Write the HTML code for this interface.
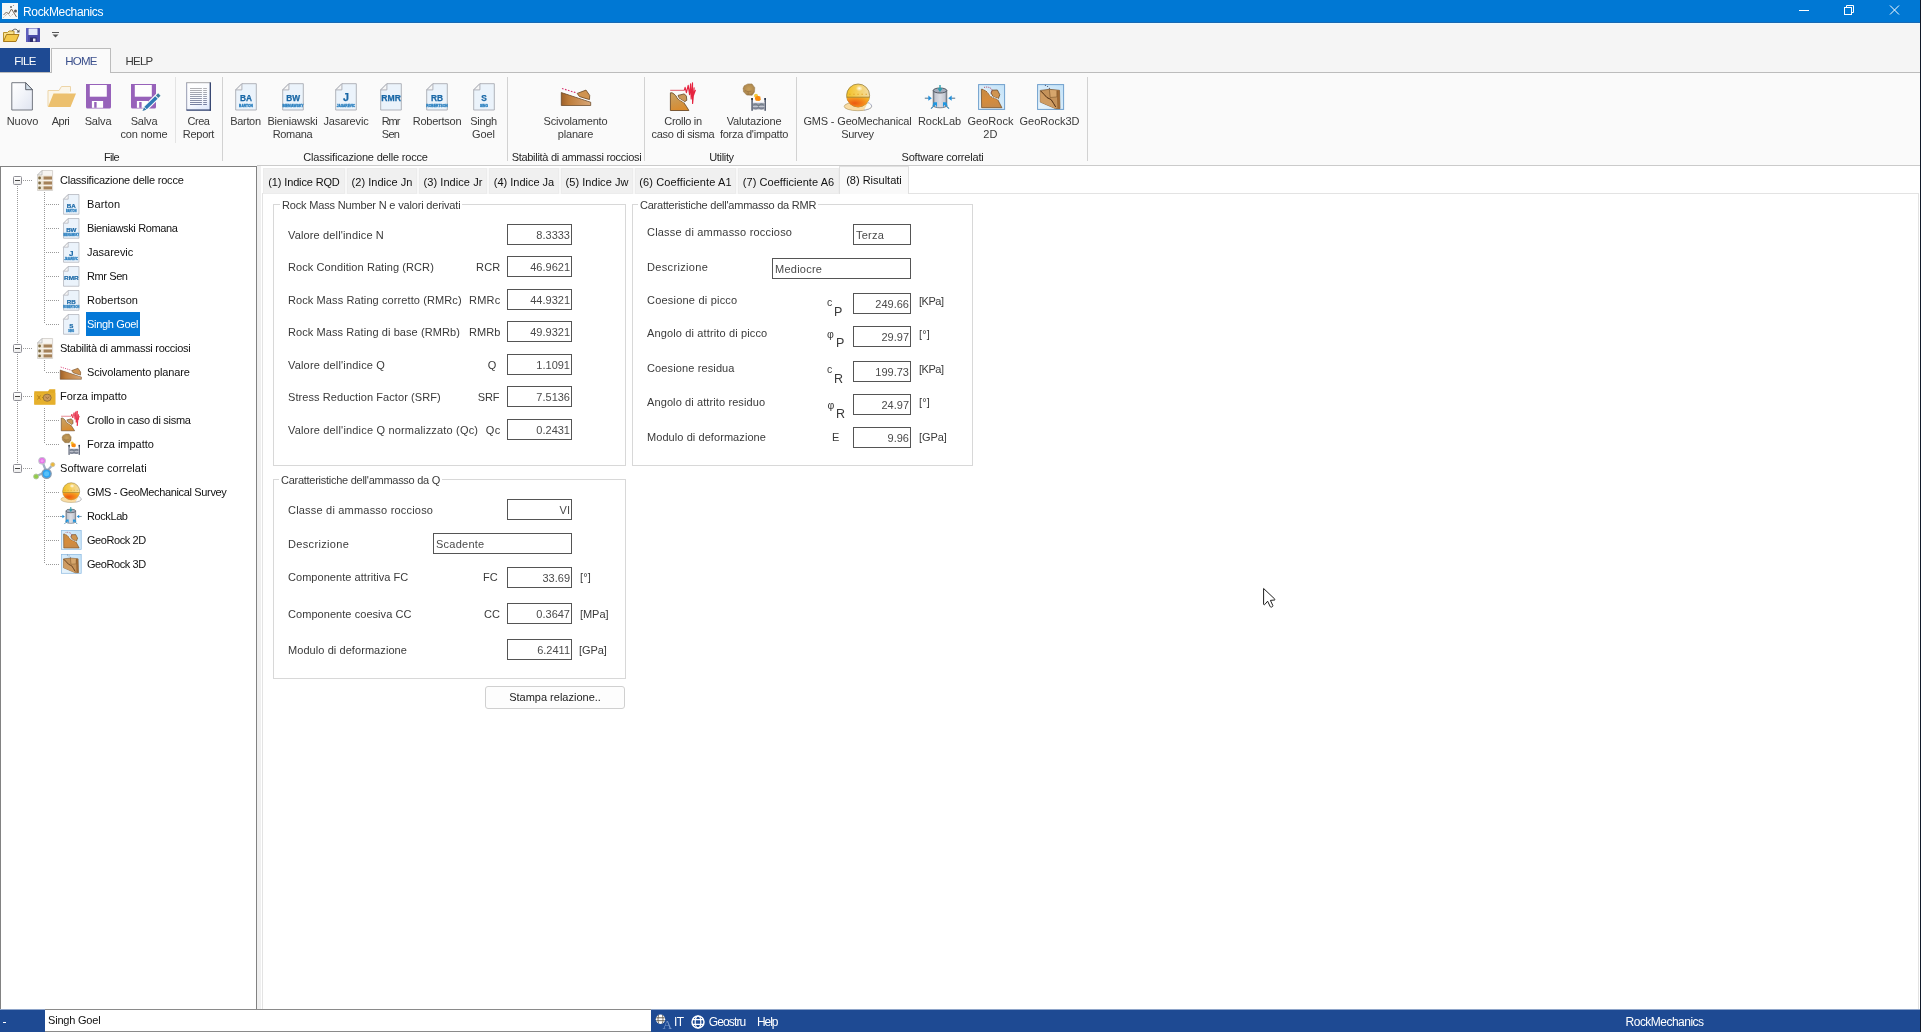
<!DOCTYPE html>
<html lang="it"><head><meta charset="utf-8"><title>RockMechanics</title>
<style>
html,body{margin:0;padding:0;}
body{width:1921px;height:1032px;overflow:hidden;background:#fff;position:relative;
 font-family:"Liberation Sans",sans-serif;font-size:11px;color:#1e1e1e;line-height:13px;}
div,span{position:absolute;box-sizing:border-box;white-space:nowrap;}
svg{position:absolute;overflow:visible;}
.c{text-align:center;transform:translateX(-50%);}
.rl{color:#3a3a3a;font-size:11px;line-height:13px;letter-spacing:-0.22px;}
.gl{color:#262626;letter-spacing:-0.22px;}
.vs{width:1px;background:#d2d2d2;}
.tr{font-size:11px;color:#111;letter-spacing:-0.3px;}
.tab{letter-spacing:-0.25px;top:168px;height:26px;background:#f0f0f0;border:1px solid #ececec;color:#111;line-height:26px;text-align:center;}
.lb{color:#3a3a3a;letter-spacing:0.120px;}
.tb{height:21px;border:1px solid #555;background:#fff;line-height:21px;padding:0 1px 0 2px;color:#4a4a4a;overflow:hidden;}
.tbr{text-align:right;}
.grp{border:1px solid #d8d8d8;}
.gt{background:#fff;color:#3a3a3a;padding:0 2px;letter-spacing:-0.17px;}
.dot-h{height:1px;background-image:linear-gradient(90deg,#9a9a9a 1px,transparent 1px);background-size:2px 1px;}
.dot-v{width:1px;background-image:linear-gradient(180deg,#9a9a9a 1px,transparent 1px);background-size:1px 2px;}
.pm{width:9px;height:9px;border:1px solid #8f8f96;border-radius:1.500px;background:linear-gradient(#fff,#eee);}
.pm i{position:absolute;left:1px;top:3px;width:5px;height:1px;background:#444;}
</style></head><body>
<div id="w" style="left:0;top:0;width:1921px;height:1032px;will-change:transform;">

<div style="left:0;top:0;width:1921px;height:23px;background:#0078d4;border-bottom:1px solid #1a69b3;"></div>
<div style="left:23px;top:5px;color:#fff;font-size:12px;line-height:14px;letter-spacing:-0.35px;">RockMechanics</div>
<svg style="left:2px;top:3px" width="16" height="16" viewBox="0 0 16 16"><rect x="0" y="0" width="16" height="16" fill="#f4f8f8"/><path d="M1.500 12l3-3 2 2 3-5 5 8" stroke="#7a6a5a" stroke-width="1" fill="none"/><path d="M1.500 14.500l4-4 3 3 3-3" stroke="#a08a7a" stroke-width="0.800" fill="none" stroke-dasharray="1 1"/><circle cx="13.500" cy="8" r="1.500" fill="#555"/><circle cx="9" cy="4" r="1" fill="#666"/><circle cx="11.500" cy="2.500" r="0.600" fill="#888"/></svg>
<svg style="left:1790px;top:0" width="131" height="23" viewBox="0 0 131 23"><g stroke="#fff" stroke-width="1" fill="none"><path d="M9 10.5h10"/><rect x="54.5" y="7.500" width="7" height="7"/><path d="M56.500 7.500v-2h7v7h-2"/><path d="M100 5.500l9 9M109 5.500l-9 9"/></g></svg>
<div style="left:0;top:23px;width:1921px;height:50px;background:#f5f5f5;border-top:1px solid #ecfbff;"></div>
<svg style="left:3px;top:28px" width="17" height="15" viewBox="0 0 17 15"><path d="M0.500 13.500v-9h4l1.500-1.500h5v3" fill="#f7e08a" stroke="#b8902a" stroke-width="1"/><path d="M0.500 13.500l3-7h12.500l-3 7z" fill="#f3c84a" stroke="#a87a1a" stroke-width="1"/><path d="M9 3c2-2.500 5-2.500 6 0.500" stroke="#555" stroke-width="1" fill="none"/><path d="M16.500 1.500v3h-3z" fill="#555"/></svg>
<svg style="left:26px;top:28px" width="14" height="14" viewBox="0 0 14 14"><rect x="0" y="0" width="14" height="14" rx="0.500" fill="#4a4aa8"/><rect x="2.500" y="0.500" width="9" height="6.500" fill="#e4e8fa"/><rect x="4" y="9.500" width="6.500" height="4.500" fill="#2a2a6a"/><rect x="7" y="10.500" width="2.500" height="3" fill="#e8e8f8"/><path d="M0 0h2v14h-2z" fill="#7070cc" opacity="0.600"/></svg>
<svg style="left:51px;top:31px" width="9" height="8" viewBox="0 0 9 8"><path d="M1 1.500h7" stroke="#555" stroke-width="1"/><path d="M1.500 3.500h6l-3 3z" fill="#555"/></svg>
<div style="left:0;top:48px;width:50px;height:25px;background:#1e4a93;color:#fff;font-size:11.500px;letter-spacing:-0.700px;line-height:26px;text-align:center;">FILE</div>
<div style="left:0;top:72px;width:1921px;height:1px;background:#bcbcbc;"></div>
<div style="left:51px;top:48px;width:60px;height:25px;background:#fafafa;border:1px solid #bcbcbc;border-bottom:none;color:#3a4f8c;font-size:11.500px;letter-spacing:-0.800px;line-height:24px;text-align:center;">HOME</div>
<div style="left:112px;top:48px;width:54px;height:24px;color:#3a3a3a;font-size:11.500px;letter-spacing:-0.800px;line-height:26px;text-align:center;">HELP</div>
<div style="left:0;top:73px;width:1921px;height:93px;background:#fafafa;"></div>
<div style="left:257px;top:165px;width:1664px;height:1px;background:#cbcbcb;"></div>
<div class="rl c" style="left:22.5px;top:115px;letter-spacing:-0.049px;">Nuovo</div>
<div class="rl c" style="left:60.5px;top:115px;letter-spacing:-0.487px;">Apri</div>
<div class="rl c" style="left:98px;top:115px;letter-spacing:-0.158px;">Salva</div>
<div class="rl c" style="left:144px;top:115px;letter-spacing:-0.158px;">Salva</div>
<div class="rl c" style="left:144px;top:128px;letter-spacing:-0.152px;">con nome</div>
<div class="rl c" style="left:198.5px;top:115px;letter-spacing:-0.448px;">Crea</div>
<div class="rl c" style="left:198.5px;top:128px;letter-spacing:-0.286px;">Report</div>
<div class="vs" style="left:175px;top:77px;height:66px;background:#e4e4e4"></div>
<div class="gl c" style="left:111.5px;top:151px;letter-spacing:-0.711px;">File</div>
<div class="vs" style="left:222px;top:77px;height:84px;"></div>
<div class="rl c" style="left:245.5px;top:115px;letter-spacing:-0.344px;">Barton</div>
<div class="rl c" style="left:292.5px;top:115px;letter-spacing:-0.174px;">Bieniawski</div>
<div class="rl c" style="left:292.5px;top:128px;letter-spacing:-0.336px;">Romana</div>
<div class="rl c" style="left:346px;top:115px;letter-spacing:-0.159px;">Jasarevic</div>
<div class="rl c" style="left:390.5px;top:115px;letter-spacing:-1.041px;">Rmr</div>
<div class="rl c" style="left:390.5px;top:128px;letter-spacing:-0.689px;">Sen</div>
<div class="rl c" style="left:437px;top:115px;letter-spacing:-0.233px;">Robertson</div>
<div class="rl c" style="left:483.5px;top:115px;letter-spacing:-0.36px;">Singh</div>
<div class="rl c" style="left:483.5px;top:128px;letter-spacing:-0.117px;">Goel</div>
<div class="gl c" style="left:365.5px;top:151px;letter-spacing:-0.186px;">Classificazione delle rocce</div>
<div class="vs" style="left:507px;top:77px;height:84px;"></div>
<div class="rl c" style="left:575.5px;top:115px;letter-spacing:-0.186px;">Scivolamento</div>
<div class="rl c" style="left:575.5px;top:128px;letter-spacing:-0.167px;">planare</div>
<div class="gl c" style="left:576.5px;top:151px;letter-spacing:-0.291px;">Stabilità di ammassi rocciosi</div>
<div class="vs" style="left:644px;top:77px;height:84px;"></div>
<div class="rl c" style="left:683px;top:115px;letter-spacing:-0.332px;">Crollo in</div>
<div class="rl c" style="left:683px;top:128px;letter-spacing:-0.287px;">caso di sisma</div>
<div class="rl c" style="left:754px;top:115px;letter-spacing:-0.177px;">Valutazione</div>
<div class="rl c" style="left:754px;top:128px;letter-spacing:-0.237px;">forza d'impatto</div>
<div class="gl c" style="left:721.5px;top:151px;letter-spacing:-0.332px;">Utility</div>
<div class="vs" style="left:796px;top:77px;height:84px;"></div>
<div class="rl c" style="left:857.5px;top:115px;letter-spacing:-0.159px;">GMS - GeoMechanical</div>
<div class="rl c" style="left:857.5px;top:128px;letter-spacing:-0.25px;">Survey</div>
<div class="rl c" style="left:939.5px;top:115px;letter-spacing:-0.037px;">RockLab</div>
<div class="rl c" style="left:990.5px;top:115px;letter-spacing:0.023px;">GeoRock</div>
<div class="rl c" style="left:990.5px;top:128px;letter-spacing:0.238px;">2D</div>
<div class="rl c" style="left:1049.5px;top:115px;letter-spacing:-0.003px;">GeoRock3D</div>
<div class="gl c" style="left:942.5px;top:151px;letter-spacing:-0.2px;">Software correlati</div>
<div class="vs" style="left:1087px;top:77px;height:84px;"></div>
<svg style="left:11px;top:82px" width="23" height="30" viewBox="0 0 23 30"><defs><linearGradient id="g1" x1="0" y1="0" x2="1" y2="1"><stop offset="0" stop-color="#ffffff"/><stop offset="0.450" stop-color="#f3f5fa"/><stop offset="1" stop-color="#dfe4f0"/></linearGradient></defs><path d="M0.800 0.700h13.900l6.700 7v20.300h-20.600z" fill="url(#g1)" stroke="#666b75" stroke-width="0.900"/><path d="M14.700 0.700v7h6.700z" fill="#d3dee9" stroke="#50555f" stroke-width="0.900" stroke-linejoin="round"/></svg>
<svg style="left:47px;top:86px" width="30" height="22" viewBox="0 0 30 22"><path d="M1 20.500v-16h11l2.500-4h9v5" fill="#fbf6ea" stroke="#edd5a8" stroke-width="1"/><path d="M1 21l5.500-13.500h22.500l-5.500 13.500z" fill="#ecc06e"/></svg>
<svg style="left:86px;top:84px" width="30" height="28" viewBox="0 0 30 28"><path d="M0 0h25v23a1.500 1.500 0 0 1-1.500 1.500h-22a1.500 1.500 0 0 1-1.500-1.500z" fill="#9762ba"/><rect x="3.800" y="1" width="17" height="11.700" fill="#fefefe"/><rect x="5.900" y="17" width="11.200" height="6.800" fill="#fefefe"/><rect x="8.200" y="18" width="2.400" height="5.800" fill="#9762ba"/></svg>
<svg style="left:131px;top:84px" width="30" height="28" viewBox="0 0 30 28"><path d="M0 0h25v23a1.500 1.500 0 0 1-1.500 1.500h-22a1.500 1.500 0 0 1-1.500-1.500z" fill="#9762ba"/><rect x="3.800" y="1" width="17" height="11.700" fill="#fefefe"/><rect x="5.900" y="17" width="11.200" height="6.800" fill="#fefefe"/><rect x="8.200" y="18" width="2.400" height="5.800" fill="#9762ba"/><g transform="translate(11.300,27.300) rotate(-44.500)"><path d="M-0.500 0l4.500-2.900h21v5.800h-21z" fill="#fbfbfb"/><path d="M0.300 0l3.700-1.700v3.400z" fill="#3a78a8"/><rect x="4.600" y="-1.700" width="15.200" height="3.400" fill="#2f7ab6"/><rect x="20.700" y="-1.700" width="3.200" height="3.400" fill="#3c7f9e"/></g></svg>
<svg style="left:186px;top:82px" width="26" height="30" viewBox="0 0 26 30"><defs><linearGradient id="g2" x1="0.300" y1="0" x2="0.700" y2="1"><stop offset="0" stop-color="#ffffff"/><stop offset="0.650" stop-color="#f7f9fe"/><stop offset="1" stop-color="#dfe8fb"/></linearGradient></defs><rect x="0.700" y="0.700" width="23.800" height="27.600" fill="url(#g2)"/><path d="M0.700 28.300v-27.600" stroke="#8b91a9" stroke-width="0.900"/><path d="M0.300 0.700h24.600" stroke="#9c9c9e" stroke-width="0.900"/><path d="M24.300 0.500v28.200" stroke="#2f3f6c" stroke-width="1.300"/><path d="M0.500 28.100h24.400" stroke="#2f3f6c" stroke-width="1.300"/><path d="M4 6.5h11.900M17.200 6.5h3.700" stroke="#a3a3a6" stroke-width="0.850"/><path d="M4 8.5h11.900M17.200 8.5h3.700" stroke="#9d9ea4" stroke-width="0.850"/><path d="M4 10.5h11.900M17.200 10.5h3.700" stroke="#9698a2" stroke-width="0.850"/><path d="M4 12.5h11.900M17.200 12.5h3.700" stroke="#8e92a0" stroke-width="0.850"/><path d="M4 14.5h11.900M17.200 14.5h3.700" stroke="#878c9e" stroke-width="0.850"/><path d="M4 16.5h11.900M17.200 16.5h3.700" stroke="#7f859c" stroke-width="0.850"/><path d="M4 18.5h11.900M17.200 18.5h3.700" stroke="#757c98" stroke-width="0.850"/><path d="M4 20.5h11.900M17.200 20.5h3.700" stroke="#6a7394" stroke-width="0.850"/><path d="M4 22.5h11.900M17.200 22.5h3.700" stroke="#5f698f" stroke-width="0.850"/></svg>
<svg style="left:235px;top:83px" width="22.0" height="28.0" viewBox="0 0 22.0 28.0"><g transform="scale(1.0)"><path d="M6.900 0.700h14.400v26.300h-20.600v-20.100z" fill="#ebf3fb" stroke="#a9abb3" stroke-width="0.900"/><path d="M6.900 0.700v6.200h-6.200z" fill="#f6f6f6" stroke="#a9abb3" stroke-width="0.900" stroke-linejoin="round"/><text x="11.100" y="18" text-anchor="middle" font-family="Liberation Sans,sans-serif" font-weight="bold" font-size="8.3" fill="#1867a6" stroke="#1867a6" stroke-width="0.250">BA</text><text x="11" y="24" text-anchor="middle" font-family="Liberation Sans,sans-serif" font-weight="bold" font-size="3.800" fill="#1b6ba9" stroke="#2f86c6" stroke-width="0.350" textLength="13.8" lengthAdjust="spacingAndGlyphs">BARTON</text></g></svg>
<svg style="left:282px;top:83px" width="22.0" height="28.0" viewBox="0 0 22.0 28.0"><g transform="scale(1.0)"><path d="M6.900 0.700h14.400v26.300h-20.600v-20.100z" fill="#ebf3fb" stroke="#a9abb3" stroke-width="0.900"/><path d="M6.900 0.700v6.200h-6.200z" fill="#f6f6f6" stroke="#a9abb3" stroke-width="0.900" stroke-linejoin="round"/><text x="11.100" y="18" text-anchor="middle" font-family="Liberation Sans,sans-serif" font-weight="bold" font-size="8.3" fill="#1867a6" stroke="#1867a6" stroke-width="0.250">BW</text><text x="11" y="24" text-anchor="middle" font-family="Liberation Sans,sans-serif" font-weight="bold" font-size="3.800" fill="#1b6ba9" stroke="#2f86c6" stroke-width="0.350" textLength="21" lengthAdjust="spacingAndGlyphs">BIENIAWSKY</text></g></svg>
<svg style="left:335px;top:83px" width="22.0" height="28.0" viewBox="0 0 22.0 28.0"><g transform="scale(1.0)"><path d="M6.900 0.700h14.400v26.300h-20.600v-20.100z" fill="#ebf3fb" stroke="#a9abb3" stroke-width="0.900"/><path d="M6.900 0.700v6.200h-6.200z" fill="#f6f6f6" stroke="#a9abb3" stroke-width="0.900" stroke-linejoin="round"/><text x="11.100" y="18" text-anchor="middle" font-family="Liberation Sans,sans-serif" font-weight="bold" font-size="10.7" fill="#1867a6" stroke="#1867a6" stroke-width="0.250">J</text><text x="11" y="24" text-anchor="middle" font-family="Liberation Sans,sans-serif" font-weight="bold" font-size="3.800" fill="#1b6ba9" stroke="#2f86c6" stroke-width="0.350" textLength="18.3" lengthAdjust="spacingAndGlyphs">JASAREVIC</text></g></svg>
<svg style="left:380px;top:83px" width="22.0" height="28.0" viewBox="0 0 22.0 28.0"><g transform="scale(1.0)"><path d="M6.900 0.700h14.400v26.300h-20.600v-20.100z" fill="#ebf3fb" stroke="#a9abb3" stroke-width="0.900"/><path d="M6.900 0.700v6.200h-6.200z" fill="#f6f6f6" stroke="#a9abb3" stroke-width="0.900" stroke-linejoin="round"/><text x="11.100" y="18" text-anchor="middle" font-family="Liberation Sans,sans-serif" font-weight="bold" font-size="8.3" fill="#1867a6" stroke="#1867a6" stroke-width="0.250" textLength="19.600" lengthAdjust="spacingAndGlyphs">RMR</text></g></svg>
<svg style="left:426px;top:83px" width="22.0" height="28.0" viewBox="0 0 22.0 28.0"><g transform="scale(1.0)"><path d="M6.900 0.700h14.400v26.300h-20.600v-20.100z" fill="#ebf3fb" stroke="#a9abb3" stroke-width="0.900"/><path d="M6.900 0.700v6.200h-6.200z" fill="#f6f6f6" stroke="#a9abb3" stroke-width="0.900" stroke-linejoin="round"/><text x="11.100" y="18" text-anchor="middle" font-family="Liberation Sans,sans-serif" font-weight="bold" font-size="8.3" fill="#1867a6" stroke="#1867a6" stroke-width="0.250">RB</text><text x="11" y="24" text-anchor="middle" font-family="Liberation Sans,sans-serif" font-weight="bold" font-size="3.800" fill="#1b6ba9" stroke="#2f86c6" stroke-width="0.350" textLength="21.4" lengthAdjust="spacingAndGlyphs">ROBERTSON</text></g></svg>
<svg style="left:473px;top:83px" width="22.0" height="28.0" viewBox="0 0 22.0 28.0"><g transform="scale(1.0)"><path d="M6.900 0.700h14.400v26.300h-20.600v-20.100z" fill="#ebf3fb" stroke="#a9abb3" stroke-width="0.900"/><path d="M6.900 0.700v6.200h-6.200z" fill="#f6f6f6" stroke="#a9abb3" stroke-width="0.900" stroke-linejoin="round"/><text x="11.100" y="18" text-anchor="middle" font-family="Liberation Sans,sans-serif" font-weight="bold" font-size="8.3" fill="#1867a6" stroke="#1867a6" stroke-width="0.250">S</text><text x="11" y="24" text-anchor="middle" font-family="Liberation Sans,sans-serif" font-weight="bold" font-size="3.800" fill="#1b6ba9" stroke="#2f86c6" stroke-width="0.350" textLength="8" lengthAdjust="spacingAndGlyphs">SING</text></g></svg>
<svg style="left:561px;top:87px" width="30.0" height="19.0" viewBox="0 0 30.0 19.0"><defs><linearGradient id="g3" x1="0" y1="0" x2="1" y2="0"><stop offset="0" stop-color="#9c602a"/><stop offset="0.250" stop-color="#bd7c3a"/><stop offset="1" stop-color="#d9a878"/></linearGradient></defs><g transform="scale(1.0)"><path d="M0.300 5.500l29.400 9.700v3.300h-29.400z" fill="url(#g3)" stroke="#5f3d1c" stroke-width="0.700" stroke-linejoin="round"/><path d="M1 4.300l28.500 9.500" stroke="#fdfdfd" stroke-width="1.100"/><path d="M16.200 6.400l8.800-3.300 3.700 5.300-0.200 4.200-4.800-1.400-5.300-1.700z" fill="#cf9350" stroke="#6a4520" stroke-width="0.800" stroke-linejoin="round"/><path d="M1 1.500l14.500 4.400" stroke="#d6306c" stroke-width="1.100" stroke-dasharray="1.600 1.500"/></g></svg>
<svg style="left:670px;top:83px" width="27.0" height="28.0" viewBox="0 0 27.0 28.0"><defs><linearGradient id="g4" x1="0" y1="0" x2="0.300" y2="1"><stop offset="0" stop-color="#c9a468"/><stop offset="0.600" stop-color="#cf9548"/><stop offset="1" stop-color="#d98c30"/></linearGradient></defs><g transform="scale(1.0)"><path d="M0.400 9.800h1.700c3 1.500 4.300 3.500 5.600 6.100 2 1.500 4 2.200 5.900 3.500 2 2.500 3.700 5.500 5.300 8.100h-18.500z" fill="url(#g4)" stroke="#5f3d1c" stroke-width="0.800" stroke-linejoin="round"/><path d="M8 12.400l6.300-1.500 2.100 2.200 0.400 4.200-2.100 1.400-5.700-3.400z" fill="#c9975a" stroke="#5f4326" stroke-width="0.800" stroke-linejoin="round"/><path d="M7.200 12.800c0.600 1.300 0.900 2 1.300 2.800 2.200 1.500 4 2.300 5.600 3.600" stroke="#fdf6ea" stroke-width="1" fill="none"/><path d="M0.200 7.300h14.100" stroke="#dc4a5c" stroke-width="0.900"/><path d="M14.300 7.300l0.800-2.900 1.300 5.300 1.800-7.400 1.400 9.400 1-10.800 0.600 15 1.300-16 0.100 20.600 1.500-15.700-0.600 7.600 2-5.500" stroke="#e6233f" stroke-width="1.150" fill="none" stroke-linejoin="round"/></g></svg>
<svg style="left:743px;top:84px" width="24.0" height="27.0" viewBox="0 0 24.0 27.0"><defs><radialGradient id="g5" cx="0.500" cy="0.450" r="0.600"><stop offset="0" stop-color="#c9a05a"/><stop offset="0.700" stop-color="#b08a50"/><stop offset="1" stop-color="#8c6c3c"/></radialGradient></defs><g transform="scale(1.0)"><path d="M1.200 1.800l3.600-1.900h4.200l2.800 3.800-0.300 4.300-2.300 3.300-5.500-0.200-3.200-3.300-0.400-3.600z" fill="url(#g5)" stroke="#9a7a4a" stroke-width="0.500"/><path d="M2 6.500l3 1.200 3.500-0.600M5 7.700l0.300 3" stroke="#8a6436" stroke-width="0.700" fill="none" opacity="0.700"/><circle cx="13" cy="11.700" r="2" fill="#f2c93a"/><path d="M12.300 13l2.200-1.200 2.800 0.700 0.500 3.200-1.500 1.400-3.500-0.300-0.900-2z" fill="#f98a0c"/><rect x="8.300" y="14" width="1.600" height="12.800" fill="#5a6274"/><rect x="21.400" y="14" width="1.600" height="12.800" fill="#5a6274"/><rect x="8.300" y="14" width="1.600" height="2" fill="#2e3a40"/><rect x="21.400" y="14" width="1.600" height="2" fill="#2e3a50"/><rect x="9.900" y="18" width="11.500" height="1.200" fill="#e6e6ee"/><rect x="9.900" y="19.200" width="11.500" height="6.200" fill="#8e93a3"/><path d="M10 22.400h11.400" stroke="#c9ccd6" stroke-width="1"/><path d="M10.500 21c1.500-1.500 3.500-1.500 5 1.400 1.500-2.900 3.500-2.900 5-1.400" stroke="#5f6f78" stroke-width="0.900" fill="none"/><path d="M10.500 24c1.500 1.400 3.500 1.400 5-1 1.500 2.400 3.500 2.400 5 1" stroke="#6c7484" stroke-width="0.900" fill="none"/></g></svg>
<svg style="left:843px;top:83px" width="29.0" height="28.0" viewBox="0 0 29.0 28.0"><defs><linearGradient id="g6" x1="0" y1="0" x2="1" y2="0"><stop offset="0" stop-color="#f1bf25"/><stop offset="0.450" stop-color="#f6cf5a"/><stop offset="1" stop-color="#f3dca4"/></linearGradient><radialGradient id="g7" cx="0.350" cy="0.600" r="0.750"><stop offset="0" stop-color="#ec5a12"/><stop offset="0.550" stop-color="#f58a1c"/><stop offset="1" stop-color="#f3b428"/></radialGradient><radialGradient id="g8"><stop offset="0" stop-color="#fffdf2"/><stop offset="1" stop-color="#fffdf2" stop-opacity="0"/></radialGradient></defs><g transform="scale(1.0)"><ellipse cx="14.900" cy="23.400" rx="13.700" ry="4.300" fill="#f9dca4" stroke="#a8915a" stroke-width="0.600"/><path d="M21 27c4-0.300 7.600-1.800 7.600-3.800 0-1.600-1.500-2.900-3.600-3.600" fill="#fbfbf6" stroke="#8892b4" stroke-width="0.700"/><circle cx="15.100" cy="12.500" r="11.500" fill="url(#g6)" stroke="#8d7434" stroke-width="0.700"/><path d="M3.700 14.200a11.500 11.500 0 0 0 22.800 0z" fill="url(#g7)"/><ellipse cx="16.300" cy="5.400" rx="3.500" ry="2.800" fill="url(#g8)"/><path d="M3.700 14.200h22.800" stroke="#9a7a30" stroke-width="0.800"/><path d="M6.200 11.200h18" stroke="#e0a024" stroke-width="1.100" stroke-dasharray="1.300 2.800"/></g></svg>
<svg style="left:925px;top:85px" width="30.0" height="24.0" viewBox="0 0 30.0 24.0"><defs><linearGradient id="g9" x1="0" y1="0" x2="1" y2="0"><stop offset="0" stop-color="#7c838e"/><stop offset="0.150" stop-color="#c4c8d2"/><stop offset="0.500" stop-color="#dcdde4"/><stop offset="0.850" stop-color="#c4c8d2"/><stop offset="1" stop-color="#7c838e"/></linearGradient></defs><g transform="scale(1.0)"><path d="M8.200 5.500v15a6.800 2.300 0 0 0 13.600 0v-15z" fill="url(#g9)" stroke="#555c66" stroke-width="0.700"/><ellipse cx="15" cy="5.500" rx="6.800" ry="2.500" fill="#a4acbc" stroke="#464c55" stroke-width="0.900"/><path d="M15 0v4" stroke="#2f9fae" stroke-width="1.400"/><path d="M12.300 3.300h5.400l-2.700 3.700z" fill="#2b9db0"/><path d="M-0.200 13.200h4" stroke="#52728a" stroke-width="1"/><path d="M3.300 10.600l3.500 2.600-3.500 2.600z" fill="#1f8fdc"/><path d="M30.200 13.200h-4" stroke="#52728a" stroke-width="1"/><path d="M26.700 10.600l-3.500 2.600 3.500 2.600z" fill="#1f8fdc"/><path d="M6 23.700l3.600-3.600" stroke="#3a86b4" stroke-width="1.100"/><path d="M8.600 17.300h3.400v5.500l-1.200-2.700-3.300 0.800z" fill="#1f96e0"/><path d="M24 23.700l-3.600-3.600" stroke="#3a86b4" stroke-width="1.100"/><path d="M21.400 17.300h-3.400v5.500l1.200-2.700 3.300 0.800z" fill="#1f96e0"/></g></svg>
<svg style="left:978px;top:84px" width="27.0" height="26.0" viewBox="0 0 27.0 26.0"><defs><linearGradient id="g10" x1="0" y1="0" x2="0.200" y2="1"><stop offset="0" stop-color="#c48a44"/><stop offset="0.600" stop-color="#d68c3c"/><stop offset="1" stop-color="#c88a48"/></linearGradient><linearGradient id="g11" x1="1" y1="0" x2="0" y2="1"><stop offset="0" stop-color="#c3e2f8"/><stop offset="1" stop-color="#eaf5fc"/></linearGradient></defs><g transform="scale(1.0)"><rect x="0.600" y="0.600" width="26" height="24.800" fill="url(#g11)" stroke="#6f9fcd" stroke-width="1"/><path d="M3.400 5.200l2 0.300c2 0.800 3.300 1.700 4.500 3.200 1 1.600 2 3 3.500 4.100 2 1 4.300 1.800 6.300 2.800l4.200 8.100h-20.300z" fill="url(#g10)" stroke="#6a4520" stroke-width="0.700" stroke-linejoin="round"/><path d="M14.100 6.200l5.300-0.200 2.400 4.700-1.400 3.900-5.200-1.800-2.100-3.800z" fill="#cf9450" stroke="#6a4a26" stroke-width="0.800" stroke-linejoin="round"/><path d="M5.400 4.700c2 0.800 3.600 1.900 4.800 3.500 1 1.600 2 3.100 3.500 4.200 2 1 4.300 1.900 6.600 3" stroke="#fdfdfd" stroke-width="1.100" stroke-dasharray="1.400 1" fill="none"/><path d="M6.100 3.400c2-0.600 4.500-0.400 6 0.500 1.300 0.700 2 1.500 2 2.500 0 1.200-0.800 2.200-1.400 3" stroke="#a83450" stroke-width="0.900" stroke-dasharray="1 1.100" fill="none"/></g></svg>
<svg style="left:1037px;top:84px" width="27.0" height="26.0" viewBox="0 0 27.0 26.0"><defs><linearGradient id="g12" x1="1" y1="0" x2="0" y2="1"><stop offset="0" stop-color="#c3e2f8"/><stop offset="1" stop-color="#eaf5fc"/></linearGradient></defs><g transform="scale(1.0)"><rect x="0.600" y="0.600" width="26" height="24.800" fill="url(#g12)" stroke="#6f9fcd" stroke-width="1"/><path d="M3.300 6.400l9-1.100 10.200 1 0.500 18.400h-4.300l-15.400-6.600z" fill="#c5935a" stroke="#5e3e1e" stroke-width="0.600" stroke-linejoin="round"/><path d="M3.300 6.800l6.600 6.700 4.200 2.100 4.600 7.400v1.700l-15.400-6.600z" fill="#cf9c62"/><path d="M13 6l6.600 0.400 0.500 6.800-6.600 0.600z" fill="#d6a66c"/><path d="M19.700 6.300l2.800 0.200 0.500 18.200h-2.600z" fill="#a06a34"/><path d="M3.600 6.900c2.500 2.300 4.400 4.600 6.300 6.600 1.500 0.900 2.800 1.300 4.200 2.100 1.700 2.500 3.200 5 4.600 7.400" stroke="#4e2c10" stroke-width="1" fill="none"/><path d="M12.400 5.500l0.700 8M13.100 13.500l6.800-0.500 0.200-6" stroke="#7a5428" stroke-width="0.600" fill="none"/><circle cx="8.400" cy="1.300" r="0.600" fill="#4c4c66"/><circle cx="10.600" cy="2.500" r="0.600" fill="#4c4c66"/><circle cx="12.400" cy="4.300" r="0.600" fill="#4c4c66"/></g></svg>
<div style="left:0;top:166px;width:257px;height:850px;background:#fff;border:1px solid #828282;"></div>
<div style="left:257px;top:166px;width:4px;height:850px;background:#f0f0f0;"></div>
<div class="dot-v" style="left:17px;top:186px;height:278px;"></div>
<div class="dot-h" style="left:23px;top:180px;width:10px;"></div>
<div class="pm" style="left:13px;top:176px;"><i></i></div>
<div class="tr" style="left:60px;top:174px;letter-spacing:-0.224px;">Classificazione delle rocce</div>
<svg style="left:36.7px;top:169.5px" width="16" height="21" viewBox="0 0 16 21"><path d="M5 0.500h10.600v20h-15.100v-15.500z" fill="#f7f5f2" stroke="#cfccc6" stroke-width="0.800"/><path d="M5 0.500v4.500h-4.500z" fill="#f0f0f0" stroke="#b9b9b9" stroke-width="0.800" stroke-linejoin="round"/><rect x="0.900" y="5.600" width="14.300" height="14.300" fill="#ece2d2"/><path d="M0.900 10.500h14.300M0.900 15.400h14.300" stroke="#f8f4ec" stroke-width="0.900"/><circle cx="2.600" cy="8.0" r="1.400" fill="#7d6c44"/><rect x="6.600" y="6.5" width="8.400" height="3" fill="#a5825a"/><circle cx="2.600" cy="13.0" r="1.400" fill="#7d6c44"/><rect x="6.600" y="11.5" width="8.400" height="3" fill="#a5825a"/><circle cx="2.600" cy="17.9" r="1.400" fill="#7d6c44"/><rect x="6.600" y="16.4" width="8.400" height="3" fill="#a5825a"/></svg>
<div class="dot-h" style="left:46px;top:204px;width:14px;"></div>
<div class="tr" style="left:87px;top:198px;letter-spacing:0.136px;">Barton</div>
<svg style="left:63.2px;top:193.5px" width="16.5" height="21.0" viewBox="0 0 16.5 21.0"><g transform="scale(0.75)"><path d="M6.900 0.700h14.400v26.300h-20.600v-20.100z" fill="#ebf3fb" stroke="#a9abb3" stroke-width="0.900"/><path d="M6.900 0.700v6.200h-6.200z" fill="#f6f6f6" stroke="#a9abb3" stroke-width="0.900" stroke-linejoin="round"/><text x="11.100" y="18" text-anchor="middle" font-family="Liberation Sans,sans-serif" font-weight="bold" font-size="8.3" fill="#1867a6" stroke="#1867a6" stroke-width="0.250">BA</text><text x="11" y="24" text-anchor="middle" font-family="Liberation Sans,sans-serif" font-weight="bold" font-size="3.800" fill="#1b6ba9" stroke="#2f86c6" stroke-width="0.350" textLength="13.8" lengthAdjust="spacingAndGlyphs">BARTON</text></g></svg>
<div class="dot-h" style="left:46px;top:228px;width:14px;"></div>
<div class="tr" style="left:87px;top:222px;letter-spacing:-0.351px;">Bieniawski Romana</div>
<svg style="left:63.2px;top:217.5px" width="16.5" height="21.0" viewBox="0 0 16.5 21.0"><g transform="scale(0.75)"><path d="M6.900 0.700h14.400v26.300h-20.600v-20.100z" fill="#ebf3fb" stroke="#a9abb3" stroke-width="0.900"/><path d="M6.900 0.700v6.200h-6.200z" fill="#f6f6f6" stroke="#a9abb3" stroke-width="0.900" stroke-linejoin="round"/><text x="11.100" y="18" text-anchor="middle" font-family="Liberation Sans,sans-serif" font-weight="bold" font-size="8.3" fill="#1867a6" stroke="#1867a6" stroke-width="0.250">BW</text><text x="11" y="24" text-anchor="middle" font-family="Liberation Sans,sans-serif" font-weight="bold" font-size="3.800" fill="#1b6ba9" stroke="#2f86c6" stroke-width="0.350" textLength="21" lengthAdjust="spacingAndGlyphs">BIENIAWSKY</text></g></svg>
<div class="dot-h" style="left:46px;top:252px;width:14px;"></div>
<div class="tr" style="left:87px;top:246px;letter-spacing:-0.021px;">Jasarevic</div>
<svg style="left:63.2px;top:241.5px" width="16.5" height="21.0" viewBox="0 0 16.5 21.0"><g transform="scale(0.75)"><path d="M6.900 0.700h14.400v26.300h-20.600v-20.100z" fill="#ebf3fb" stroke="#a9abb3" stroke-width="0.900"/><path d="M6.900 0.700v6.200h-6.200z" fill="#f6f6f6" stroke="#a9abb3" stroke-width="0.900" stroke-linejoin="round"/><text x="11.100" y="18" text-anchor="middle" font-family="Liberation Sans,sans-serif" font-weight="bold" font-size="10.7" fill="#1867a6" stroke="#1867a6" stroke-width="0.250">J</text><text x="11" y="24" text-anchor="middle" font-family="Liberation Sans,sans-serif" font-weight="bold" font-size="3.800" fill="#1b6ba9" stroke="#2f86c6" stroke-width="0.350" textLength="18.3" lengthAdjust="spacingAndGlyphs">JASAREVIC</text></g></svg>
<div class="dot-h" style="left:46px;top:276px;width:14px;"></div>
<div class="tr" style="left:87px;top:270px;letter-spacing:-0.401px;">Rmr Sen</div>
<svg style="left:63.2px;top:265.5px" width="16.5" height="21.0" viewBox="0 0 16.5 21.0"><g transform="scale(0.75)"><path d="M6.900 0.700h14.400v26.300h-20.600v-20.100z" fill="#ebf3fb" stroke="#a9abb3" stroke-width="0.900"/><path d="M6.900 0.700v6.200h-6.200z" fill="#f6f6f6" stroke="#a9abb3" stroke-width="0.900" stroke-linejoin="round"/><text x="11.100" y="18" text-anchor="middle" font-family="Liberation Sans,sans-serif" font-weight="bold" font-size="8.3" fill="#1867a6" stroke="#1867a6" stroke-width="0.250" textLength="19.600" lengthAdjust="spacingAndGlyphs">RMR</text></g></svg>
<div class="dot-h" style="left:46px;top:300px;width:14px;"></div>
<div class="tr" style="left:87px;top:294px;letter-spacing:0.029px;">Robertson</div>
<svg style="left:63.2px;top:289.5px" width="16.5" height="21.0" viewBox="0 0 16.5 21.0"><g transform="scale(0.75)"><path d="M6.900 0.700h14.400v26.300h-20.600v-20.100z" fill="#ebf3fb" stroke="#a9abb3" stroke-width="0.900"/><path d="M6.900 0.700v6.200h-6.200z" fill="#f6f6f6" stroke="#a9abb3" stroke-width="0.900" stroke-linejoin="round"/><text x="11.100" y="18" text-anchor="middle" font-family="Liberation Sans,sans-serif" font-weight="bold" font-size="8.3" fill="#1867a6" stroke="#1867a6" stroke-width="0.250">RB</text><text x="11" y="24" text-anchor="middle" font-family="Liberation Sans,sans-serif" font-weight="bold" font-size="3.800" fill="#1b6ba9" stroke="#2f86c6" stroke-width="0.350" textLength="21.4" lengthAdjust="spacingAndGlyphs">ROBERTSON</text></g></svg>
<div class="dot-h" style="left:46px;top:324px;width:14px;"></div>
<div style="left:86px;top:312px;width:54px;height:24px;background:#0478d7;"></div>
<div class="tr" style="left:87px;top:318px;color:#fff;letter-spacing:-0.326px;">Singh Goel</div>
<svg style="left:63.2px;top:313.5px" width="16.5" height="21.0" viewBox="0 0 16.5 21.0"><g transform="scale(0.75)"><path d="M6.900 0.700h14.400v26.300h-20.600v-20.100z" fill="#ebf3fb" stroke="#a9abb3" stroke-width="0.900"/><path d="M6.900 0.700v6.200h-6.200z" fill="#f6f6f6" stroke="#a9abb3" stroke-width="0.900" stroke-linejoin="round"/><text x="11.100" y="18" text-anchor="middle" font-family="Liberation Sans,sans-serif" font-weight="bold" font-size="8.3" fill="#1867a6" stroke="#1867a6" stroke-width="0.250">S</text><text x="11" y="24" text-anchor="middle" font-family="Liberation Sans,sans-serif" font-weight="bold" font-size="3.800" fill="#1b6ba9" stroke="#2f86c6" stroke-width="0.350" textLength="8" lengthAdjust="spacingAndGlyphs">SING</text></g></svg>
<div class="dot-h" style="left:23px;top:348px;width:10px;"></div>
<div class="pm" style="left:13px;top:344px;"><i></i></div>
<div class="tr" style="left:60px;top:342px;letter-spacing:-0.263px;">Stabilità di ammassi rocciosi</div>
<svg style="left:36.7px;top:337.5px" width="16" height="21" viewBox="0 0 16 21"><path d="M5 0.500h10.600v20h-15.100v-15.500z" fill="#f7f5f2" stroke="#cfccc6" stroke-width="0.800"/><path d="M5 0.500v4.500h-4.500z" fill="#f0f0f0" stroke="#b9b9b9" stroke-width="0.800" stroke-linejoin="round"/><rect x="0.900" y="5.600" width="14.300" height="14.300" fill="#ece2d2"/><path d="M0.900 10.500h14.300M0.900 15.400h14.300" stroke="#f8f4ec" stroke-width="0.900"/><circle cx="2.600" cy="8.0" r="1.400" fill="#7d6c44"/><rect x="6.600" y="6.5" width="8.400" height="3" fill="#a5825a"/><circle cx="2.600" cy="13.0" r="1.400" fill="#7d6c44"/><rect x="6.600" y="11.5" width="8.400" height="3" fill="#a5825a"/><circle cx="2.600" cy="17.9" r="1.400" fill="#7d6c44"/><rect x="6.600" y="16.4" width="8.400" height="3" fill="#a5825a"/></svg>
<div class="dot-h" style="left:46px;top:372px;width:14px;"></div>
<div class="tr" style="left:87px;top:366px;letter-spacing:-0.152px;">Scivolamento planare</div>
<svg style="left:60px;top:366px" width="21.6" height="13.68" viewBox="0 0 21.6 13.68"><defs><linearGradient id="g13" x1="0" y1="0" x2="1" y2="0"><stop offset="0" stop-color="#9c602a"/><stop offset="0.250" stop-color="#bd7c3a"/><stop offset="1" stop-color="#d9a878"/></linearGradient></defs><g transform="scale(0.72)"><path d="M0.300 5.500l29.400 9.700v3.300h-29.400z" fill="url(#g13)" stroke="#5f3d1c" stroke-width="0.700" stroke-linejoin="round"/><path d="M1 4.300l28.500 9.500" stroke="#fdfdfd" stroke-width="1.100"/><path d="M16.200 6.400l8.800-3.300 3.700 5.300-0.200 4.200-4.800-1.400-5.300-1.700z" fill="#cf9350" stroke="#6a4520" stroke-width="0.800" stroke-linejoin="round"/><path d="M1 1.500l14.500 4.400" stroke="#d6306c" stroke-width="1.100" stroke-dasharray="1.600 1.500"/></g></svg>
<div class="dot-h" style="left:23px;top:396px;width:10px;"></div>
<div class="pm" style="left:13px;top:392px;"><i></i></div>
<div class="tr" style="left:60px;top:390px;letter-spacing:-0.038px;">Forza impatto</div>
<svg style="left:33.7px;top:389px" width="22" height="16" viewBox="0 0 22 16"><path d="M0.300 2.300h13.700l1.500-2h5.800v15.300h-21z" fill="#e2ab25"/><path d="M0.300 3.800h21v11.800h-21z" fill="#e6b02c"/><ellipse cx="13.200" cy="8.700" rx="4" ry="3.600" fill="#c99a5c" stroke="#8a6a34" stroke-width="0.800"/><path d="M11.500 8l2 1.500 1.500-1.800" stroke="#8a5a2a" stroke-width="0.700" fill="none"/><path d="M3.500 6.500l3 4M6.500 6.500l-3 4M8 8.500h1.500" stroke="#b07a1a" stroke-width="0.900"/></svg>
<div class="dot-h" style="left:46px;top:420px;width:14px;"></div>
<div class="tr" style="left:87px;top:414px;letter-spacing:-0.275px;">Crollo in caso di sisma</div>
<svg style="left:61px;top:411px" width="19.44" height="20.16" viewBox="0 0 19.44 20.16"><defs><linearGradient id="g14" x1="0" y1="0" x2="0.300" y2="1"><stop offset="0" stop-color="#c9a468"/><stop offset="0.600" stop-color="#cf9548"/><stop offset="1" stop-color="#d98c30"/></linearGradient></defs><g transform="scale(0.72)"><path d="M0.400 9.800h1.700c3 1.500 4.300 3.500 5.600 6.100 2 1.500 4 2.200 5.900 3.500 2 2.500 3.700 5.500 5.300 8.100h-18.500z" fill="url(#g14)" stroke="#5f3d1c" stroke-width="0.800" stroke-linejoin="round"/><path d="M8 12.400l6.300-1.500 2.100 2.200 0.400 4.200-2.100 1.400-5.700-3.400z" fill="#c9975a" stroke="#5f4326" stroke-width="0.800" stroke-linejoin="round"/><path d="M7.200 12.800c0.600 1.300 0.900 2 1.300 2.800 2.200 1.500 4 2.300 5.600 3.600" stroke="#fdf6ea" stroke-width="1" fill="none"/><path d="M0.200 7.300h14.100" stroke="#dc4a5c" stroke-width="0.900"/><path d="M14.300 7.300l0.800-2.900 1.300 5.300 1.800-7.400 1.400 9.400 1-10.800 0.600 15 1.300-16 0.100 20.600 1.500-15.700-0.600 7.600 2-5.500" stroke="#e6233f" stroke-width="1.150" fill="none" stroke-linejoin="round"/></g></svg>
<div class="dot-h" style="left:46px;top:444px;width:14px;"></div>
<div class="tr" style="left:87px;top:438px;letter-spacing:-0.038px;">Forza impatto</div>
<svg style="left:62px;top:434px" width="18.72" height="21.06" viewBox="0 0 18.72 21.06"><defs><radialGradient id="g15" cx="0.500" cy="0.450" r="0.600"><stop offset="0" stop-color="#c9a05a"/><stop offset="0.700" stop-color="#b08a50"/><stop offset="1" stop-color="#8c6c3c"/></radialGradient></defs><g transform="scale(0.78)"><path d="M1.200 1.800l3.600-1.900h4.200l2.800 3.800-0.300 4.300-2.300 3.300-5.500-0.200-3.200-3.300-0.400-3.600z" fill="url(#g15)" stroke="#9a7a4a" stroke-width="0.500"/><path d="M2 6.500l3 1.200 3.500-0.600M5 7.700l0.300 3" stroke="#8a6436" stroke-width="0.700" fill="none" opacity="0.700"/><circle cx="13" cy="11.700" r="2" fill="#f2c93a"/><path d="M12.300 13l2.200-1.200 2.800 0.700 0.500 3.200-1.500 1.400-3.500-0.300-0.900-2z" fill="#f98a0c"/><rect x="8.300" y="14" width="1.600" height="12.800" fill="#5a6274"/><rect x="21.400" y="14" width="1.600" height="12.800" fill="#5a6274"/><rect x="8.300" y="14" width="1.600" height="2" fill="#2e3a40"/><rect x="21.400" y="14" width="1.600" height="2" fill="#2e3a50"/><rect x="9.900" y="18" width="11.500" height="1.200" fill="#e6e6ee"/><rect x="9.900" y="19.200" width="11.500" height="6.200" fill="#8e93a3"/><path d="M10 22.400h11.400" stroke="#c9ccd6" stroke-width="1"/><path d="M10.500 21c1.500-1.500 3.500-1.500 5 1.400 1.500-2.900 3.500-2.900 5-1.400" stroke="#5f6f78" stroke-width="0.900" fill="none"/><path d="M10.500 24c1.500 1.400 3.500 1.400 5-1 1.500 2.400 3.500 2.400 5 1" stroke="#6c7484" stroke-width="0.900" fill="none"/></g></svg>
<div class="dot-h" style="left:23px;top:468px;width:10px;"></div>
<div class="pm" style="left:13px;top:464px;"><i></i></div>
<div class="tr" style="left:60px;top:462px;letter-spacing:0.059px;">Software correlati</div>
<svg style="left:33.2px;top:457px" width="23" height="24" viewBox="0 0 23 24"><path d="M9.300 4.500l3.500 9M4 19l8-4M15 13l4.500-5" stroke="#9fb0c4" stroke-width="2.200"/><circle cx="9.100" cy="3.800" r="3.300" fill="#e66ee6" stroke="#c4c4d0" stroke-width="1.100"/><circle cx="9.100" cy="3.800" r="1.600" fill="#f29cf2"/><circle cx="13.600" cy="16.700" r="4.600" fill="#2ba3f2" stroke="#8a9aae" stroke-width="1.300"/><circle cx="13.600" cy="16.700" r="2.500" fill="#56c0fa"/><circle cx="3.100" cy="19.500" r="2.500" fill="#93cc48" stroke="#b4c4a4" stroke-width="0.900"/><circle cx="19.700" cy="7.600" r="2.100" fill="#ebb83c" stroke="#d0c4a4" stroke-width="0.900"/></svg>
<div class="dot-h" style="left:46px;top:492px;width:14px;"></div>
<div class="tr" style="left:87px;top:486px;letter-spacing:-0.35px;">GMS - GeoMechanical Survey</div>
<svg style="left:60px;top:482px" width="21.46" height="20.72" viewBox="0 0 21.46 20.72"><defs><linearGradient id="g16" x1="0" y1="0" x2="1" y2="0"><stop offset="0" stop-color="#f1bf25"/><stop offset="0.450" stop-color="#f6cf5a"/><stop offset="1" stop-color="#f3dca4"/></linearGradient><radialGradient id="g17" cx="0.350" cy="0.600" r="0.750"><stop offset="0" stop-color="#ec5a12"/><stop offset="0.550" stop-color="#f58a1c"/><stop offset="1" stop-color="#f3b428"/></radialGradient><radialGradient id="g18"><stop offset="0" stop-color="#fffdf2"/><stop offset="1" stop-color="#fffdf2" stop-opacity="0"/></radialGradient></defs><g transform="scale(0.74)"><ellipse cx="14.900" cy="23.400" rx="13.700" ry="4.300" fill="#f9dca4" stroke="#a8915a" stroke-width="0.600"/><path d="M21 27c4-0.300 7.600-1.800 7.600-3.800 0-1.600-1.500-2.900-3.600-3.600" fill="#fbfbf6" stroke="#8892b4" stroke-width="0.700"/><circle cx="15.100" cy="12.500" r="11.500" fill="url(#g16)" stroke="#8d7434" stroke-width="0.700"/><path d="M3.700 14.200a11.500 11.500 0 0 0 22.800 0z" fill="url(#g17)"/><ellipse cx="16.300" cy="5.400" rx="3.500" ry="2.800" fill="url(#g18)"/><path d="M3.700 14.200h22.800" stroke="#9a7a30" stroke-width="0.800"/><path d="M6.200 11.200h18" stroke="#e0a024" stroke-width="1.100" stroke-dasharray="1.300 2.800"/></g></svg>
<div class="dot-h" style="left:46px;top:516px;width:14px;"></div>
<div class="tr" style="left:87px;top:510px;letter-spacing:-0.404px;">RockLab</div>
<svg style="left:60px;top:507px" width="21.6" height="17.28" viewBox="0 0 21.6 17.28"><defs><linearGradient id="g19" x1="0" y1="0" x2="1" y2="0"><stop offset="0" stop-color="#7c838e"/><stop offset="0.150" stop-color="#c4c8d2"/><stop offset="0.500" stop-color="#dcdde4"/><stop offset="0.850" stop-color="#c4c8d2"/><stop offset="1" stop-color="#7c838e"/></linearGradient></defs><g transform="scale(0.72)"><path d="M8.200 5.500v15a6.800 2.300 0 0 0 13.600 0v-15z" fill="url(#g19)" stroke="#555c66" stroke-width="0.700"/><ellipse cx="15" cy="5.500" rx="6.800" ry="2.500" fill="#a4acbc" stroke="#464c55" stroke-width="0.900"/><path d="M15 0v4" stroke="#2f9fae" stroke-width="1.400"/><path d="M12.300 3.300h5.400l-2.700 3.700z" fill="#2b9db0"/><path d="M-0.200 13.200h4" stroke="#52728a" stroke-width="1"/><path d="M3.300 10.600l3.500 2.600-3.500 2.600z" fill="#1f8fdc"/><path d="M30.200 13.200h-4" stroke="#52728a" stroke-width="1"/><path d="M26.700 10.600l-3.500 2.600 3.500 2.600z" fill="#1f8fdc"/><path d="M6 23.700l3.600-3.600" stroke="#3a86b4" stroke-width="1.100"/><path d="M8.600 17.300h3.400v5.500l-1.200-2.700-3.300 0.800z" fill="#1f96e0"/><path d="M24 23.700l-3.600-3.600" stroke="#3a86b4" stroke-width="1.100"/><path d="M21.400 17.300h-3.400v5.500l1.200-2.700 3.300 0.800z" fill="#1f96e0"/></g></svg>
<div class="dot-h" style="left:46px;top:540px;width:14px;"></div>
<div class="tr" style="left:87px;top:534px;letter-spacing:-0.432px;">GeoRock 2D</div>
<svg style="left:61px;top:530px" width="20.52" height="19.76" viewBox="0 0 20.52 19.76"><defs><linearGradient id="g20" x1="0" y1="0" x2="0.200" y2="1"><stop offset="0" stop-color="#c48a44"/><stop offset="0.600" stop-color="#d68c3c"/><stop offset="1" stop-color="#c88a48"/></linearGradient><linearGradient id="g21" x1="1" y1="0" x2="0" y2="1"><stop offset="0" stop-color="#c3e2f8"/><stop offset="1" stop-color="#eaf5fc"/></linearGradient></defs><g transform="scale(0.76)"><rect x="0.600" y="0.600" width="26" height="24.800" fill="url(#g21)" stroke="#8fbbe2" stroke-width="1"/><path d="M3.400 5.200l2 0.300c2 0.800 3.300 1.700 4.500 3.200 1 1.600 2 3 3.500 4.100 2 1 4.300 1.800 6.300 2.800l4.200 8.100h-20.300z" fill="url(#g20)" stroke="#6a4520" stroke-width="0.700" stroke-linejoin="round"/><path d="M14.100 6.200l5.300-0.200 2.400 4.700-1.400 3.900-5.200-1.800-2.100-3.800z" fill="#cf9450" stroke="#6a4a26" stroke-width="0.800" stroke-linejoin="round"/><path d="M5.400 4.700c2 0.800 3.600 1.900 4.800 3.500 1 1.600 2 3.100 3.500 4.200 2 1 4.300 1.900 6.600 3" stroke="#fdfdfd" stroke-width="1.100" stroke-dasharray="1.400 1" fill="none"/><path d="M6.100 3.400c2-0.600 4.500-0.400 6 0.500 1.300 0.700 2 1.500 2 2.500 0 1.200-0.800 2.200-1.400 3" stroke="#a83450" stroke-width="0.900" stroke-dasharray="1 1.100" fill="none"/></g></svg>
<div class="dot-h" style="left:46px;top:564px;width:14px;"></div>
<div class="tr" style="left:87px;top:558px;letter-spacing:-0.432px;">GeoRock 3D</div>
<svg style="left:61px;top:554px" width="20.52" height="19.76" viewBox="0 0 20.52 19.76"><defs><linearGradient id="g22" x1="1" y1="0" x2="0" y2="1"><stop offset="0" stop-color="#c3e2f8"/><stop offset="1" stop-color="#eaf5fc"/></linearGradient></defs><g transform="scale(0.76)"><rect x="0.600" y="0.600" width="26" height="24.800" fill="url(#g22)" stroke="#8fbbe2" stroke-width="1"/><path d="M3.300 6.400l9-1.100 10.200 1 0.500 18.400h-4.300l-15.400-6.600z" fill="#c5935a" stroke="#5e3e1e" stroke-width="0.600" stroke-linejoin="round"/><path d="M3.300 6.800l6.600 6.700 4.200 2.100 4.600 7.400v1.700l-15.400-6.600z" fill="#cf9c62"/><path d="M13 6l6.600 0.400 0.500 6.800-6.600 0.600z" fill="#d6a66c"/><path d="M19.700 6.300l2.800 0.200 0.500 18.200h-2.600z" fill="#a06a34"/><path d="M3.600 6.900c2.500 2.300 4.400 4.600 6.300 6.600 1.500 0.900 2.800 1.300 4.200 2.100 1.700 2.500 3.200 5 4.600 7.400" stroke="#4e2c10" stroke-width="1" fill="none"/><path d="M12.400 5.500l0.700 8M13.100 13.500l6.800-0.500 0.200-6" stroke="#7a5428" stroke-width="0.600" fill="none"/><circle cx="8.400" cy="1.300" r="0.600" fill="#4c4c66"/><circle cx="10.600" cy="2.500" r="0.600" fill="#4c4c66"/><circle cx="12.400" cy="4.300" r="0.600" fill="#4c4c66"/></g></svg>
<div class="dot-v" style="left:44px;top:192px;height:132px;"></div>
<div class="dot-v" style="left:44px;top:360px;height:12px;"></div>
<div class="dot-v" style="left:44px;top:408px;height:36px;"></div>
<div class="dot-v" style="left:44px;top:480px;height:84px;"></div>
<div style="left:261px;top:166px;width:1659px;height:843px;background:#fff;"></div>
<div style="left:262px;top:193px;width:1657px;height:826px;background:#fff;border:1px solid #e3e3e3;"></div>
<div style="left:263px;top:168px;width:576px;height:26px;background:#f8f8f8;"></div>
<div class="tab" style="left:263px;width:82px;letter-spacing:-0.143px;">(1) Indice RQD</div>
<div class="tab" style="left:347px;width:70px;letter-spacing:0.022px;">(2) Indice Jn</div>
<div class="tab" style="left:419px;width:68px;letter-spacing:0.06px;">(3) Indice Jr</div>
<div class="tab" style="left:489px;width:70px;letter-spacing:-0.011px;">(4) Indice Ja</div>
<div class="tab" style="left:561px;width:72px;letter-spacing:0.037px;">(5) Indice Jw</div>
<div class="tab" style="left:635px;width:101px;letter-spacing:0.106px;">(6) Coefficiente A1</div>
<div class="tab" style="left:738px;width:101px;letter-spacing:0.061px;">(7) Coefficiente A6</div>
<div style="left:839px;top:166px;width:70px;height:28px;background:#f9f9f9;border:1px solid #e0e0e0;border-bottom:none;color:#111;line-height:26px;text-align:center;letter-spacing:-0.002px;">(8) Risultati</div>
<div class="grp" style="left:273px;top:204px;width:353px;height:262px;"></div>
<div class="gt" style="left:280px;top:199px;letter-spacing:-0.172px;">Rock Mass Number N e valori derivati</div>
<div class="lb" style="left:288px;top:229px;letter-spacing:0.147px;">Valore dell'indice N</div>
<div class="tb tbr" style="left:507px;top:224px;width:65px;">8.3333</div>
<div class="lb" style="left:288px;top:261px;letter-spacing:0.082px;">Rock Condition Rating (RCR)</div>
<div class="lb" style="left:476.1px;top:261px;letter-spacing:0.128px;">RCR</div>
<div class="tb tbr" style="left:507px;top:256px;width:65px;">46.9621</div>
<div class="lb" style="left:288px;top:294px;letter-spacing:0.098px;">Rock Mass Rating corretto (RMRc)</div>
<div class="lb" style="left:469.1px;top:294px;letter-spacing:0.179px;">RMRc</div>
<div class="tb tbr" style="left:507px;top:289px;width:65px;">44.9321</div>
<div class="lb" style="left:288px;top:326px;letter-spacing:0.085px;">Rock Mass Rating di base (RMRb)</div>
<div class="lb" style="left:469.1px;top:326px;letter-spacing:0.043px;">RMRb</div>
<div class="tb tbr" style="left:507px;top:321px;width:65px;">49.9321</div>
<div class="lb" style="left:288px;top:359px;letter-spacing:0.172px;">Valore dell'indice Q</div>
<div class="lb" style="left:487.7px;top:359px;">Q</div>
<div class="tb tbr" style="left:507px;top:354px;width:65px;">1.1091</div>
<div class="lb" style="left:288px;top:391px;letter-spacing:0.083px;">Stress Reduction Factor (SRF)</div>
<div class="lb" style="left:477.7px;top:391px;letter-spacing:-0.1px;">SRF</div>
<div class="tb tbr" style="left:507px;top:386px;width:65px;">7.5136</div>
<div class="lb" style="left:288px;top:424px;letter-spacing:0.177px;">Valore dell'indice Q normalizzato (Qc)</div>
<div class="lb" style="left:485.7px;top:424px;letter-spacing:0.537px;">Qc</div>
<div class="tb tbr" style="left:507px;top:419px;width:65px;">0.2431</div>
<div class="grp" style="left:632px;top:204px;width:341px;height:262px;"></div>
<div class="gt" style="left:638px;top:199px;letter-spacing:-0.232px;">Caratteristiche dell'ammasso da RMR</div>
<div class="lb" style="left:647px;top:226px;letter-spacing:0.2px;">Classe di ammasso roccioso</div>
<div class="tb" style="left:853px;top:224px;width:58px;letter-spacing:0.250px;">Terza</div>
<div class="lb" style="left:647px;top:261px;letter-spacing:0.333px;">Descrizione</div>
<div class="tb" style="left:772px;top:258px;width:139px;letter-spacing:0.250px;">Mediocre</div>
<div class="lb" style="left:647px;top:294px;letter-spacing:0.21px;">Coesione di picco</div>
<div class="lb" style="left:827px;top:296px;font-size:10.500px;">c</div>
<div class="lb" style="left:834px;top:306px;font-size:12.500px;">P</div>
<div class="tb tbr" style="left:853px;top:293px;width:58px;">249.66</div>
<div class="lb" style="left:919px;top:295px;letter-spacing:-0.477px;">[KPa]</div>
<div class="lb" style="left:647px;top:327px;letter-spacing:0.136px;">Angolo di attrito di picco</div>
<div class="lb" style="left:827px;top:328px;font-size:10.500px;">φ</div>
<div class="lb" style="left:836px;top:337px;font-size:12.500px;">P</div>
<div class="tb tbr" style="left:853px;top:326px;width:58px;">29.97</div>
<div class="lb" style="left:919px;top:328px;">[°]</div>
<div class="lb" style="left:647px;top:362px;letter-spacing:0.125px;">Coesione residua</div>
<div class="lb" style="left:827px;top:363px;font-size:10.500px;">c</div>
<div class="lb" style="left:834px;top:373px;font-size:12.500px;">R</div>
<div class="tb tbr" style="left:853px;top:361px;width:58px;">199.73</div>
<div class="lb" style="left:919px;top:363px;letter-spacing:-0.477px;">[KPa]</div>
<div class="lb" style="left:647px;top:396px;letter-spacing:0.105px;">Angolo di attrito residuo</div>
<div class="lb" style="left:827.5px;top:399px;font-size:10.500px;">φ</div>
<div class="lb" style="left:836px;top:408px;font-size:12.500px;">R</div>
<div class="tb tbr" style="left:853px;top:394px;width:58px;">24.97</div>
<div class="lb" style="left:919px;top:396px;">[°]</div>
<div class="lb" style="left:647px;top:431px;letter-spacing:0.071px;">Modulo di deformazione</div>
<div class="lb" style="left:832px;top:431px;">E</div>
<div class="tb tbr" style="left:853px;top:427px;width:58px;">9.96</div>
<div class="lb" style="left:919px;top:431px;letter-spacing:-0.081px;">[GPa]</div>
<div class="grp" style="left:273px;top:479px;width:353px;height:200px;"></div>
<div class="gt" style="left:279px;top:474px;letter-spacing:-0.265px;">Caratteristiche dell'ammasso da Q</div>
<div class="lb" style="left:288px;top:504px;letter-spacing:0.2px;">Classe di ammasso roccioso</div>
<div class="tb tbr" style="left:507px;top:499px;width:65px;">VI</div>
<div class="lb" style="left:288px;top:538px;letter-spacing:0.333px;">Descrizione</div>
<div class="tb" style="left:433px;top:533px;width:139px;letter-spacing:0.250px;">Scadente</div>
<div class="lb" style="left:288px;top:571px;letter-spacing:0.049px;">Componente attritiva FC</div>
<div class="lb" style="left:483px;top:571px;">FC</div>
<div class="tb tbr" style="left:507px;top:567px;width:65px;">33.69</div>
<div class="lb" style="left:580px;top:571px;">[°]</div>
<div class="lb" style="left:288px;top:608px;letter-spacing:0.055px;">Componente coesiva CC</div>
<div class="lb" style="left:484px;top:608px;">CC</div>
<div class="tb tbr" style="left:507px;top:603px;width:65px;">0.3647</div>
<div class="lb" style="left:580px;top:608px;letter-spacing:-0.059px;">[MPa]</div>
<div class="lb" style="left:288px;top:644px;letter-spacing:0.071px;">Modulo di deformazione</div>
<div class="tb tbr" style="left:507px;top:639px;width:65px;">6.2411</div>
<div class="lb" style="left:579px;top:644px;letter-spacing:-0.081px;">[GPa]</div>
<div style="left:485px;top:686px;width:140px;height:23px;border:1px solid #d0d0d0;border-radius:3px;background:#fdfdfd;color:#222;line-height:21px;text-align:center;">Stampa relazione..</div>
<svg style="left:1263px;top:588px" width="13" height="20" viewBox="0 0 13 20"><path d="M0.600 0.500v15.600c0 0.700 0.600 0.900 1.100 0.500l2.900-3.400 2.500 5.200c0.400 0.800 1.100 0.900 1.900 0.500 0.800-0.400 1-1 0.700-1.700l-2.300-4.800 4.200-0.400c0.500-0.100 0.500-0.600 0.200-0.900z" fill="#fff" stroke="#111" stroke-width="0.950" stroke-linejoin="round"/></svg>
<div style="left:0;top:1009px;width:1921px;height:1px;background:#8ea4c9;"></div>
<div style="left:0;top:1010px;width:1921px;height:22px;background:#1e4a93;"></div>
<div style="left:3px;top:1022px;width:3px;height:1px;background:#fff;"></div>
<div style="left:45px;top:1009px;width:606px;height:23px;background:#fff;border:1px solid #8a8a8a;border-left:none;border-right:none;color:#111;line-height:20px;padding-left:3px;letter-spacing:-0.200px;">Singh Goel</div>
<svg style="left:655px;top:1013px" width="16" height="17" viewBox="0 0 16 17"><circle cx="5.500" cy="6.200" r="4.700" fill="#fff"/><path d="M1.200 4.800h8.600M1.200 7.700h8.600" stroke="#5f584c" stroke-width="0.900"/><path d="M3.700 1.800c-0.900 2.800-0.900 6 0 8.800M7.300 1.800c0.900 2.800 0.900 6 0 8.800" stroke="#5f584c" stroke-width="0.800" fill="none"/><text x="7.600" y="16.400" font-family="Liberation Serif,serif" font-size="13.500" fill="#7d9acb">A</text></svg>
<div style="left:674px;top:1015px;color:#fff;font-size:12px;line-height:14px;letter-spacing:-0.472px;">IT</div>
<svg style="left:691px;top:1015px" width="14" height="14" viewBox="0 0 14 14"><circle cx="7" cy="7" r="6" fill="none" stroke="#fff" stroke-width="1.500"/><ellipse cx="7" cy="7" rx="2.800" ry="6" fill="none" stroke="#fff" stroke-width="1.200"/><path d="M1.200 4.600h11.600M1.200 9.400h11.600" stroke="#fff" stroke-width="1.100"/></svg>
<div style="left:708.7px;top:1015px;color:#fff;font-size:12px;line-height:14px;letter-spacing:-0.865px;">Geostru</div>
<div style="left:757px;top:1015px;color:#fff;font-size:12px;line-height:14px;letter-spacing:-1.062px;">Help</div>
<div style="left:1625.6px;top:1015px;color:#fff;font-size:12px;line-height:14px;letter-spacing:-0.525px;">RockMechanics</div>
<div style="left:1920px;top:0;width:1px;height:1032px;background:#101828;"></div>
</div></body></html>
